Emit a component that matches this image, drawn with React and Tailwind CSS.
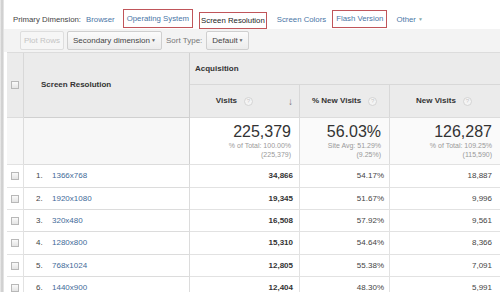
import React from "react";

const Help = () => (
  <span className="inline-flex items-center justify-center w-[9px] h-[9px] rounded-full border border-[#d4d4d4] bg-[#f4f4f4] text-[6px] leading-none text-[#c8c8c8] ml-[7px] font-normal">?</span>
);

const Check = () => (
  <span className="block w-[8px] h-[8px] border border-[#b8b8b8] bg-gradient-to-b from-[#fafafa] to-[#e4e4e4]" />
);

const rows = [
  ["1366x768", "34,866", "54.17%", "18,887", 23],
  ["1920x1080", "19,345", "51.67%", "9,996", 22],
  ["320x480", "16,508", "57.92%", "9,561", 22],
  ["1280x800", "15,310", "54.64%", "8,366", 23],
  ["768x1024", "12,805", "55.38%", "7,091", 22],
  ["1440x900", "12,404", "48.30%", "5,991", 22],
];

export default function App() {
  return (
    <div className="w-[500px] h-[292px] bg-white overflow-hidden flex text-[#333]" style={{ fontFamily: '"Liberation Sans", Arial, sans-serif' }}>
      <div className="w-[4px] shrink-0 bg-gradient-to-r from-[#f0f0f0] via-[#c8c8c8] to-[#ececec]" />
      <div className="flex-1 flex flex-col">
        {/* Primary dimension row */}
        <div className="h-[29px] shrink-0 flex items-end text-[7.8px] pl-[9px]">
          <span className="text-[#444] mb-[3px]">Primary Dimension:</span>
          <span className="text-[#4a76a6] ml-[5px] mb-[3px]">Browser</span>
          <span className="ml-[8px] mb-[1px] h-[19px] px-[3px] flex items-center border border-[#c0555a] text-[#4a76a6]">Operating System</span>
          <span className="ml-[6px] mb-[0px] h-[17px] pt-[1px] px-[1px] flex items-center border border-[#c0555a] text-[#222]">Screen Resolution</span>
          <span className="ml-[10px] mb-[3px] text-[#4a76a6]">Screen Colors</span>
          <span className="ml-[6px] mb-[1px] h-[18px] px-[3px] flex items-center border border-[#c0555a] text-[#4a76a6]">Flash Version</span>
          <span className="ml-[9px] mb-[3px] text-[#4a76a6] flex items-center">Other<span className="ml-[2px] text-[5px] text-[#8aa]">▼</span></span>
        </div>
        {/* Toolbar */}
        <div className="h-[23px] shrink-0 bg-[#f3f3f3] flex items-center text-[8px] pl-[16px]">
          <span className="h-[19px] px-[3px] flex items-center border border-[#dedede] rounded-[2px] bg-[#f6f6f6] text-[#c4c4c4]">Plot Rows</span>
          <span className="ml-[3px] h-[19px] w-[95px] px-[5px] flex items-center justify-between border border-[#cfcfcf] rounded-[2px] bg-gradient-to-b from-[#fbfbfb] to-[#ececec] text-[#444]">
            Secondary dimension<span className="text-[5px] text-[#666]">▼</span>
          </span>
          <span className="ml-[4px] text-[#777]">Sort Type:</span>
          <span className="ml-[4px] h-[19px] w-[43px] px-[5px] flex items-center justify-between border border-[#cfcfcf] rounded-[2px] bg-gradient-to-b from-[#fbfbfb] to-[#ececec] text-[#444]">
            Default<span className="text-[5px] text-[#666]">▼</span>
          </span>
        </div>
        {/* Table */}
        <div className="shrink-0 ml-[3px] grid grid-cols-[17px_166px_110px_90px_110px] text-[8px] border-t border-[#dcdcdc]">
          {/* Header */}
          <div className="row-span-2 h-[64px] bg-[#ebebeb] border-r border-[#d8d8d8] flex items-center justify-center">
            <Check />
          </div>
          <div className="row-span-2 bg-[#ebebeb] border-r border-[#d0d0d0] flex items-center pl-[17px] font-bold text-[#333]">
            Screen Resolution
          </div>
          <div className="col-span-3 h-[32px] bg-[#ebebeb] border-b border-[#d8d8d8] flex items-center pl-[5px] font-bold text-[#333]">
            Acquisition
          </div>
          <div className="h-[32px] bg-[#ebebeb] border-r border-[#d8d8d8] flex items-center justify-end pr-[6px] font-bold">
            Visits<Help /><span className="ml-[35px] text-[10px] font-normal text-[#777]">↓</span>
          </div>
          <div className="bg-[#ebebeb] border-r border-[#d8d8d8] flex items-center pl-[12px] font-bold">
            % New Visits<Help />
          </div>
          <div className="bg-[#ebebeb] flex items-center pl-[26px] font-bold">
            New Visits<Help />
          </div>
          {/* Totals */}
          <div className="h-[47px] bg-[#f7f7f7] border-t border-r border-[#dcdcdc]" />
          <div className="bg-[#f7f7f7] border-t border-r border-[#d0d0d0]" />
          {[
            ["225,379", "% of Total: 100.00%", "(225,379)"],
            ["56.03%", "Site Avg: 51.29%", "(9.25%)"],
            ["126,287", "% of Total: 109.25%", "(115,590)"],
          ].map(([big, a, b], i) => (
            <div key={i} className={`${i === 0 ? "bg-white" : "bg-[#fafafa]"} border-t border-[#dcdcdc] ${i < 2 ? "border-r" : ""} flex flex-col items-end pr-[8px] pt-[5px]`}>
              <span className="text-[16px] leading-[17px] text-[#333]">{big}</span>
              <span className="text-[7px] leading-[9px] text-[#999] mt-[1px]">{a}</span>
              <span className="text-[7px] leading-[9px] text-[#999]">{b}</span>
            </div>
          ))}
          {/* Data rows */}
          {rows.map(([res, v, p, n, h], i) => (
            <React.Fragment key={i}>
              <div className="bg-white border-t border-r border-[#e2e2e2] flex items-center justify-center" style={{ height: h }}>
                <Check />
              </div>
              <div className="bg-white border-t border-r border-[#dcdcdc] flex items-center pl-[12px]">
                <span className="w-[16px] text-[#444]">{i + 1}.</span>
                <span className="text-[#3f6b99]">{res}</span>
              </div>
              <div className="bg-white border-t border-r border-[#e2e2e2] flex items-center justify-end pr-[6px] font-bold text-[#333]">{v}</div>
              <div className="bg-white border-t border-r border-[#e2e2e2] flex items-center justify-end pr-[5px] text-[#444]">{p}</div>
              <div className="bg-white border-t border-[#e2e2e2] flex items-center justify-end pr-[8px] text-[#444]">{n}</div>
            </React.Fragment>
          ))}
        </div>
      </div>
    </div>
  );
}
